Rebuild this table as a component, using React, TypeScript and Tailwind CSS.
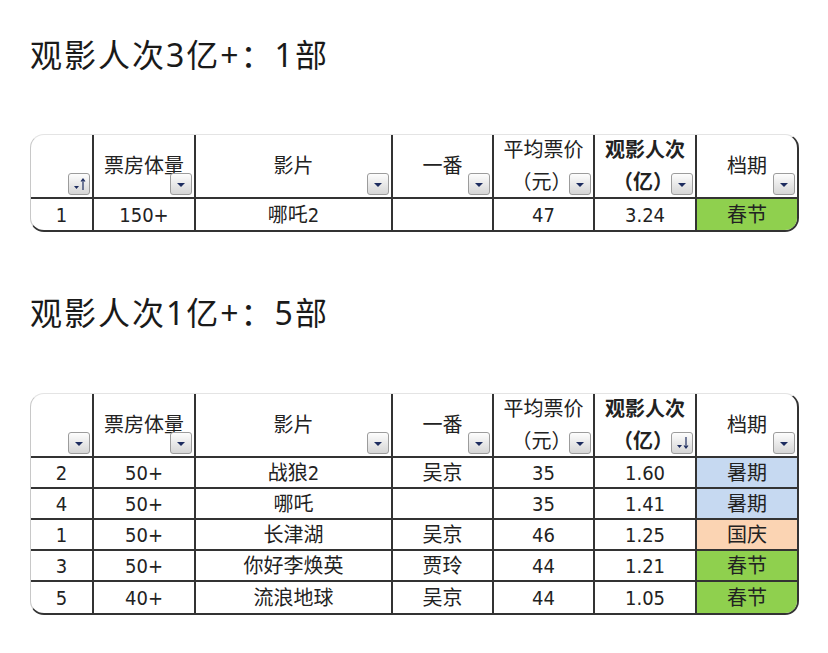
import React from 'react'

type Row = {
  rank: string
  box: string
  film: string
  lead: string
  price: string
  aud: string
  season: '春节' | '暑期' | '国庆'
}

const seasonColor: Record<Row['season'], string> = {
  春节: 'bg-[#8fd04e]',
  暑期: 'bg-[#c6d9f1]',
  国庆: 'bg-[#fbd4b3]',
}

const top3: Row[] = [
  { rank: '1', box: '150+', film: '哪吒2', lead: '', price: '47', aud: '3.24', season: '春节' },
]

const top1: Row[] = [
  { rank: '2', box: '50+', film: '战狼2', lead: '吴京', price: '35', aud: '1.60', season: '暑期' },
  { rank: '4', box: '50+', film: '哪吒', lead: '', price: '35', aud: '1.41', season: '暑期' },
  { rank: '1', box: '50+', film: '长津湖', lead: '吴京', price: '46', aud: '1.25', season: '国庆' },
  { rank: '3', box: '50+', film: '你好李焕英', lead: '贾玲', price: '44', aud: '1.21', season: '春节' },
  { rank: '5', box: '40+', film: '流浪地球', lead: '吴京', price: '44', aud: '1.05', season: '春节' },
]

const gridCols = 'grid grid-cols-[63px_102px_197px_101px_101px_102px_100px]'

function Drop({ sort }: { sort?: 'up' | 'down' }) {
  return (
    <div className="
      absolute
      right-[2px]
      bottom-[2px]
      w-[22px]
      h-[22px]
      rounded-[3px]
      border
      border-[#9c9c9c]
      bg-linear-to-b
      from-[#fdfdfd]
      to-[#d6d6d6]
      ">
      <svg width="20" height="20" viewBox="0 0 20 20">
        {sort
          ? <>
            <polygon points="5,12 10,12 7.5,15" fill="#1d2c5f" />
            {sort === 'up'
              ? <path d="M14 16 V5 M12 7.5 L14 5 L16 7.5" stroke="#1d2c5f" strokeWidth="1.2" fill="none" />
              : <path d="M14 4 V15 M12 12.5 L14 15 L16 12.5" stroke="#1d2c5f" strokeWidth="1.2" fill="none" />
            }
          </>
          : <polygon points="6,9 14,9 10,13" fill="#1d2c5f" />
        }
      </svg>
    </div>
  )
}

function HeadCell({ children, sort, last, bold }: {
  children: React.ReactNode
  sort?: 'up' | 'down'
  last?: boolean
  bold?: boolean
}) {
  return (
    <div className={`
      relative
      h-[64px]
      border-b-2
      border-[#333]
      flex
      flex-col
      items-center
      justify-center
      leading-[32px]
      text-[20px]
      ${last ? '' : 'border-r-2'}
      ${bold ? 'font-bold' : ''}
      `}>
      {children}
      <Drop sort={sort} />
    </div>
  )
}

function DataTable({ rows, firstSort, audSort }: {
  rows: Row[]
  firstSort?: 'up' | 'down'
  audSort?: 'up' | 'down'
}) {
  return (
    <div className="
      ml-[30px]
      w-[769px]
      rounded-[14px]
      overflow-hidden
      bg-white
      border-t
      border-l
      border-t-[#e4e4e4]
      border-l-[#c8c8c8]
      border-r-2
      border-b-2
      border-r-[#333]
      border-b-[#333]
      text-[#222]
      ">
      <div className={gridCols}>
        <HeadCell sort={firstSort}>{''}</HeadCell>
        <HeadCell>票房体量</HeadCell>
        <HeadCell>影片</HeadCell>
        <HeadCell>一番</HeadCell>
        <HeadCell>
          <span>平均票价</span>
          <span className="pr-[4px]">（元）</span>
        </HeadCell>
        <HeadCell sort={audSort} bold>
          <span>观影人次</span>
          <span className="pr-[4px]">（亿）</span>
        </HeadCell>
        <HeadCell last>档期</HeadCell>
      </div>
      {rows.map((r, i) => {
        const isLast = i === rows.length - 1
        const cell = `
          h-[31px]
          flex
          items-center
          justify-center
          text-[20px]
          border-[#333]
          ${isLast ? '' : 'border-b-2'}
        `
        return (
          <div key={i} className={gridCols}>
            <div className={`${cell} border-r-2`}>{r.rank}</div>
            <div className={`${cell} border-r-2`}>{r.box}</div>
            <div className={`${cell} border-r-2`}>{r.film}</div>
            <div className={`${cell} border-r-2`}>{r.lead}</div>
            <div className={`${cell} border-r-2`}>{r.price}</div>
            <div className={`${cell} border-r-2`}>{r.aud}</div>
            <div className={`${cell} ${seasonColor[r.season]}`}>{r.season}</div>
          </div>
        )
      })}
    </div>
  )
}

function Title({ text }: { text: string }) {
  return (
    <div className="
      ml-[30px]
      h-[48px]
      leading-[48px]
      text-[32px]
      tracking-[2px]
      text-[#1a1a1a]
      font-['Noto_Sans','Noto_Sans_CJK_SC',sans-serif]
      ">
      {text}
    </div>
  )
}

export default function App() {
  return (
    <div className="
      w-[828px]
      h-[653px]
      bg-white
      pt-[31px]
      font-['DejaVu_Sans_Condensed','Noto_Sans_CJK_SC',sans-serif]
      ">
      <Title text="观影人次3亿+：1部" />
      <div className="mt-[55px]">
        <DataTable rows={top3} firstSort="up" />
      </div>
      <div className="mt-[57px]">
        <Title text="观影人次1亿+：5部" />
      </div>
      <div className="mt-[56px]">
        <DataTable rows={top1} audSort="down" />
      </div>
    </div>
  )
}
